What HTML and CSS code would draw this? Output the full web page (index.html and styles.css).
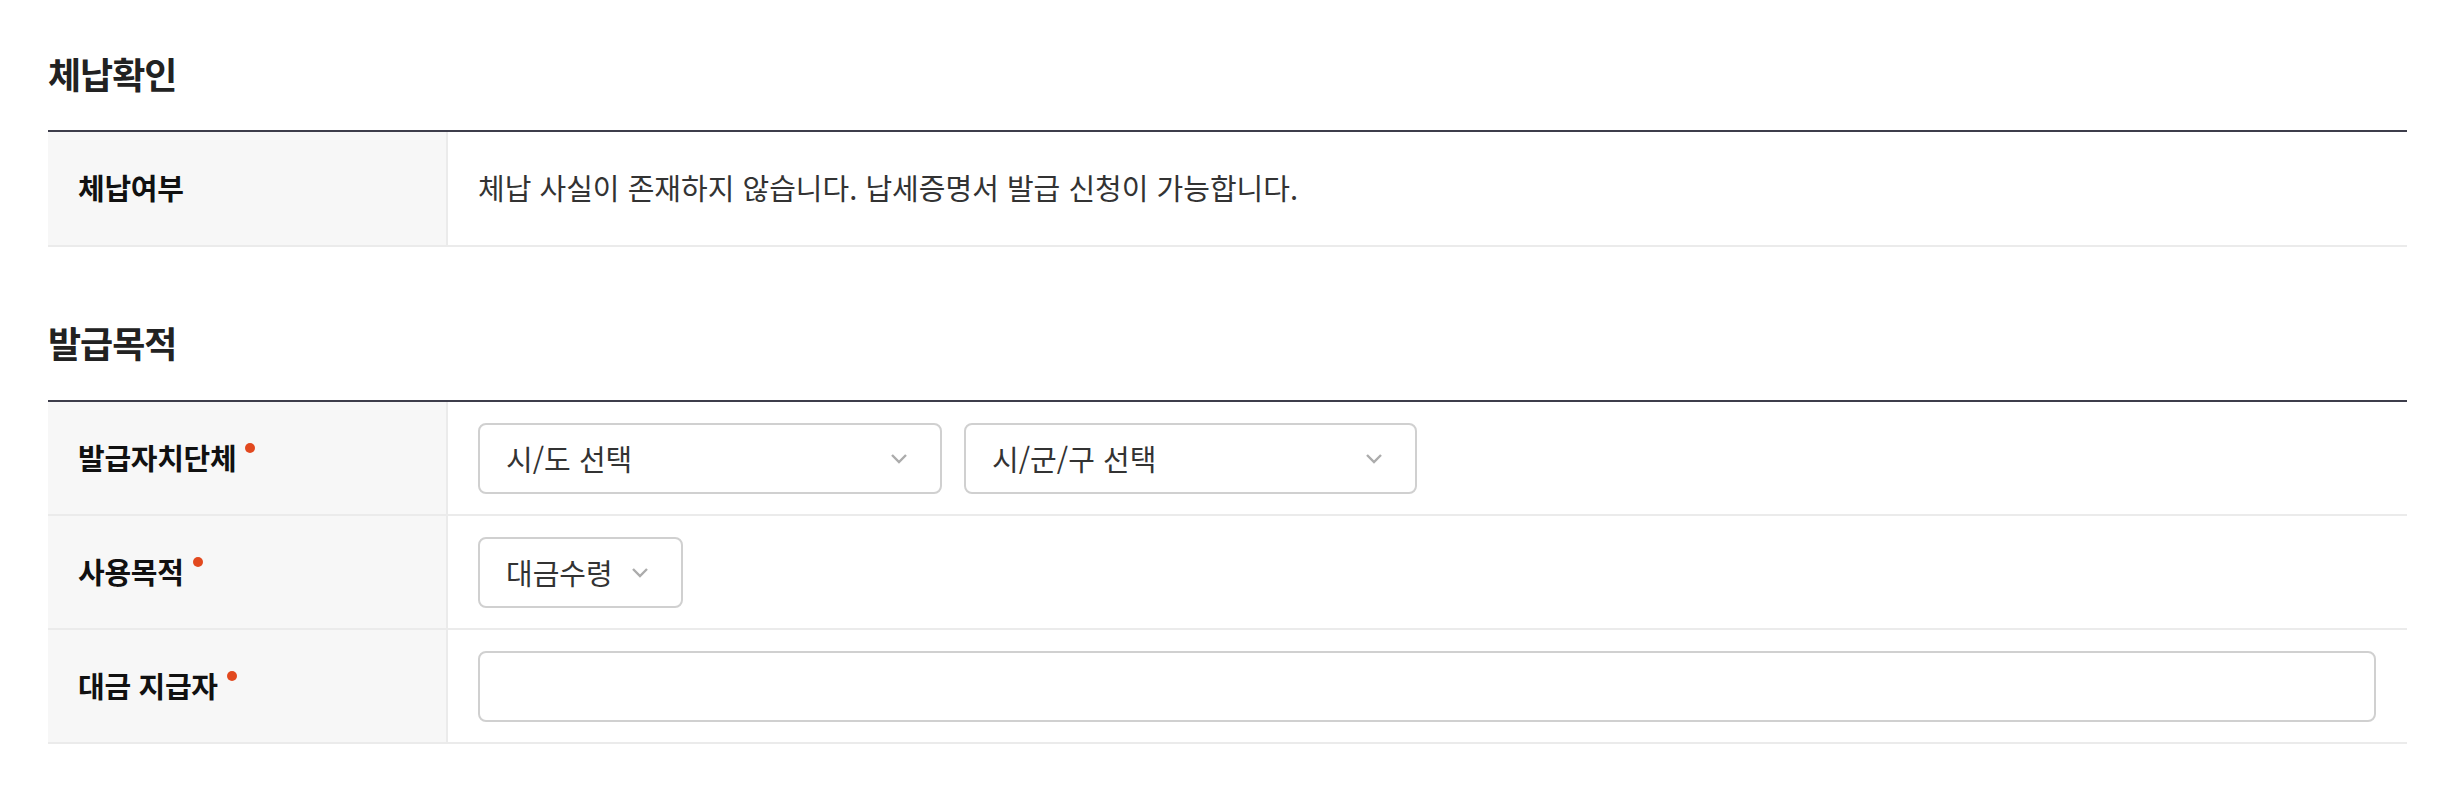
FILE: index.html
```html
<!DOCTYPE html>
<html lang="ko">
<head>
<meta charset="utf-8" />
<title>납세증명서 발급</title>
<link rel="stylesheet" href="styles.css">
</head>
<body>
<div class="page">
	<h2 class="tit tit_first">체납확인</h2>
	<div class="tbl">
		<div class="row row_info">
			<div class="th">체납여부</div>
			<div class="td">체납 사실이 존재하지 않습니다. 납세증명서 발급 신청이 가능합니다.</div>
		</div>
	</div>

	<h2 class="tit tit_second">발급목적</h2>
	<div class="tbl">
		<div class="row">
			<div class="th">발급자치단체<i class="req"></i></div>
			<div class="td">
				<div class="sel sel_sido"><span>시/도 선택</span><svg width="18" height="11" viewBox="0 0 18 11"><path d="M2 2l7 7 7-7" fill="none" stroke="#acacac" stroke-width="2.4"/></svg></div>
				<div class="sel sel_sgg"><span>시/군/구 선택</span><svg width="18" height="11" viewBox="0 0 18 11"><path d="M2 2l7 7 7-7" fill="none" stroke="#acacac" stroke-width="2.4"/></svg></div>
			</div>
		</div>
		<div class="row">
			<div class="th">사용목적<i class="req"></i></div>
			<div class="td">
				<div class="sel sel_auto"><span>대금수령</span><svg width="18" height="11" viewBox="0 0 18 11"><path d="M2 2l7 7 7-7" fill="none" stroke="#acacac" stroke-width="2.4"/></svg></div>
			</div>
		</div>
		<div class="row">
			<div class="th">대금 지급자<i class="req"></i></div>
			<div class="td">
				<input type="text" class="ipt" />
			</div>
		</div>
	</div>
</div>
</body>
</html>
```

FILE: styles.css
```css
*{ margin:0; padding:0; box-sizing:border-box;}
body{ font-family:"Noto Sans CJK KR", "Noto Sans", sans-serif; color:#333; background:#fff;}
.page{ padding:0 41px 0 48px;}

.tit{ font-size:36px; font-weight:700; color:#222; line-height:48px; letter-spacing:-1px;}
.tit_first{ margin-top:49px; margin-bottom:33px;}
.tit_second{ margin-top:71px; margin-bottom:34px;}

.tbl{ border-top:2px solid #3d3d4b;}
.row{ display:flex; min-height:114px; border-bottom:2px solid #ebebeb;}
.row_info{ min-height:115px;}
.row_info .td{ padding-bottom:4px;}
.th{ width:400px; flex-shrink:0; display:flex; align-items:center; padding:0 0 3px 30px; background:#f7f7f7; border-right:2px solid #ebebeb; font-size:29px; font-weight:700; color:#111; letter-spacing:-0.3px;}
.td{ flex:1; display:flex; align-items:center; gap:22px; padding:0 31px 0 30px; font-size:29px; color:#333;}

.req{ display:inline-block; width:10px; height:10px; border-radius:50%; background:#e2491f; margin-left:9px; align-self:flex-start; margin-top:41px;}

.sel{ display:flex; align-items:center; justify-content:space-between; height:71px; padding:0 32px 0 26px; border:2px solid #d0d0d0; border-radius:8px; background:#fff; font-size:29px; color:#333;}
.sel svg{ flex-shrink:0;}
.sel_sido{ width:464px;}
.sel_sgg{ width:453px;}
.sel_auto{ gap:18px; padding-right:32px;}

.ipt{ flex:1; height:71px; border:2px solid #d0d0d0; border-radius:8px; outline:none; background:#fff;}
```
